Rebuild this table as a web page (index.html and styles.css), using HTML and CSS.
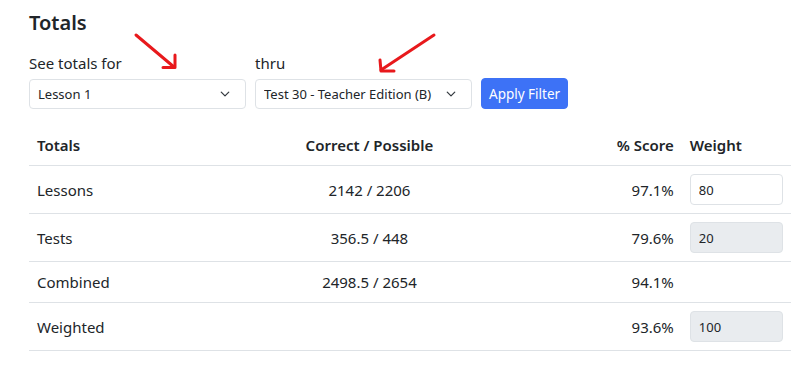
FILE: index.html
```html
<!DOCTYPE html>
<html lang="en">
<head>
  <meta charset="UTF-8">
  <title>Totals</title>
  <link rel="stylesheet" href="styles.css">
</head>
<body>
  <div class="container">
    <h4>Totals</h4>

    <div class="filter">
      <div class="field">
        <label for="from">See totals for</label>
        <select id="from" class="form-select">
          <option>Lesson 1</option>
        </select>
      </div>
      <div class="field">
        <label for="thru">thru</label>
        <select id="thru" class="form-select">
          <option>Test 30 - Teacher Edition (B)</option>
        </select>
      </div>
      <button class="btn">Apply Filter</button>
    </div>

    <table class="totals">
      <thead>
        <tr>
          <th class="col-name">Totals</th>
          <th class="col-count">Correct / Possible</th>
          <th class="col-score">% Score</th>
          <th class="col-weight">Weight</th>
        </tr>
      </thead>
      <tbody>
        <tr>
          <td>Lessons</td>
          <td class="col-count">2142 / 2206</td>
          <td class="col-score">97.1%</td>
          <td><input class="form-control" value="80"></td>
        </tr>
        <tr>
          <td>Tests</td>
          <td class="col-count">356.5 / 448</td>
          <td class="col-score">79.6%</td>
          <td><input class="form-control" value="20" disabled></td>
        </tr>
        <tr>
          <td>Combined</td>
          <td class="col-count">2498.5 / 2654</td>
          <td class="col-score">94.1%</td>
          <td></td>
        </tr>
        <tr>
          <td>Weighted</td>
          <td class="col-count"></td>
          <td class="col-score">93.6%</td>
          <td><input class="form-control" value="100" disabled></td>
        </tr>
      </tbody>
    </table>

    <!-- red pen marks pointing at the two dropdowns -->
    <svg class="marks" width="811" height="120" viewBox="0 0 811 120">
      <g fill="none" stroke="#e8191c" stroke-width="3" stroke-linecap="round" stroke-linejoin="round">
        <path d="M136 35 L174 67"/>
        <path d="M163 67.5 L175 67.5 L175 55"/>
        <path d="M434 35 L381 70"/>
        <path d="M380 60 L381 71 L394 71"/>
      </g>
    </svg>
  </div>
</body>
</html>
```

FILE: styles.css
```css
body {
  margin: 0;
  font-family: 'Segoe UI', 'Noto Sans', sans-serif;
  color: #212529;
  background: #fff;
}
.container {
  position: relative;
  padding: 11px 21px 0 29px;
}
h4 {
  margin: 0 0 16px;
  font-size: 20px;
  font-weight: 600;
  line-height: 24px;
}
.filter {
  display: flex;
  align-items: flex-end;
  gap: 9px;
}
.field label {
  display: block;
  font-size: 15px;
  line-height: 24px;
  margin-bottom: 4px;
}
.form-select {
  display: block;
  width: 217px;
  height: 30px;
  padding: 0 30px 0 8px;
  font-family: inherit;
  font-size: 13px;
  color: #212529;
  background-color: #fff;
  background-image: url("data:image/svg+xml,%3csvg xmlns='http://www.w3.org/2000/svg' viewBox='0 0 16 16'%3e%3cpath fill='none' stroke='%23343a40' stroke-linecap='round' stroke-linejoin='round' stroke-width='2' d='m2 5 6 6 6-6'/%3e%3c/svg%3e");
  background-repeat: no-repeat;
  background-position: right 14px center;
  background-size: 12px 10px;
  border: 1px solid #dee2e6;
  border-radius: 4px;
  appearance: none;
}
.btn {
  height: 31px;
  padding: 0 7px;
  font-family: inherit;
  font-size: 13.5px;
  color: #fff;
  background: #3d72f6;
  border: 1px solid #3d72f6;
  border-radius: 4px;
  cursor: pointer;
}
.totals {
  width: 762px;
  margin-top: 16px;
  border-collapse: collapse;
  font-size: 15px;
}
.totals th,
.totals td {
  padding: 8px;
  line-height: 24px;
  text-align: left;
  border-bottom: 1px solid #dee2e6;
}
.totals th {
  font-weight: 600;
}
.col-name { width: 204px; }
.col-count { width: 224px; text-align: center !important; }
.col-score { width: 176px; text-align: right !important; }
.col-weight { width: 93px; }
.form-control {
  display: block;
  box-sizing: border-box;
  width: 93px;
  height: 31px;
  padding: 0 8px;
  font-family: inherit;
  font-size: 13px;
  color: #212529;
  background: #fff;
  border: 1px solid #dee2e6;
  border-radius: 4px;
}
.form-control:disabled {
  background: #e9ecef;
}
.marks {
  position: absolute;
  left: 0;
  top: 0;
  pointer-events: none;
}
```
